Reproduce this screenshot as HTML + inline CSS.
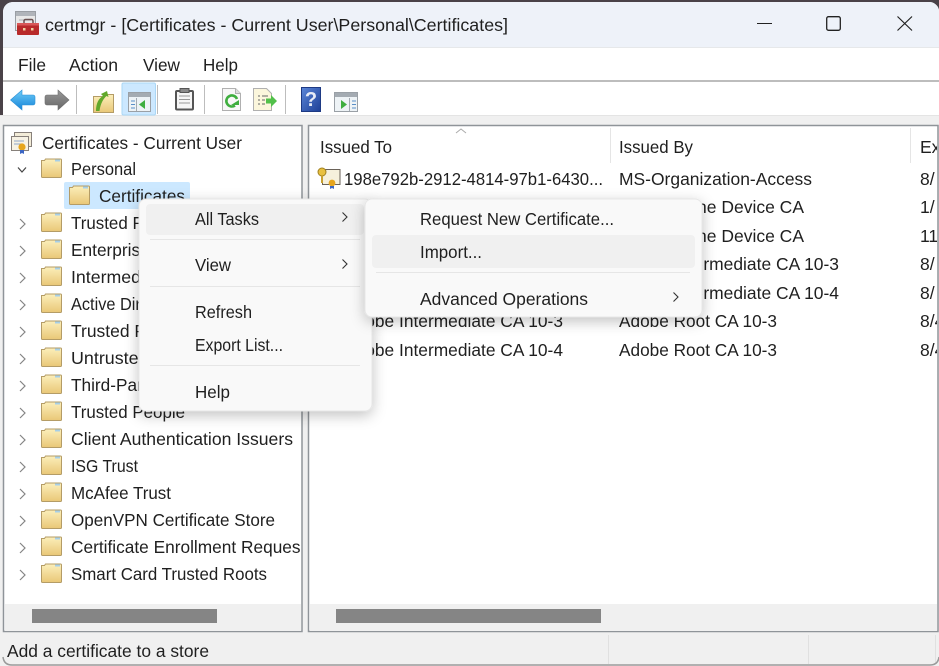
<!DOCTYPE html>
<html><head><meta charset="utf-8"><title>certmgr</title>
<style>
html,body{margin:0;padding:0;width:939px;height:666px;overflow:hidden;background:#4a4248}
svg{display:block}
text{font-family:"Liberation Sans",sans-serif;font-size:17.5px;fill:#1f1f1f}
</style></head><body>
<svg width="939" height="666" viewBox="0 0 939 666" xmlns="http://www.w3.org/2000/svg">
<defs>
<linearGradient id="fg" x1="0" y1="0" x2="0" y2="1"><stop offset="0" stop-color="#fcefbb"/><stop offset="1" stop-color="#e9c777"/></linearGradient>
<linearGradient id="blue" x1="0" y1="0" x2="0" y2="1"><stop offset="0" stop-color="#6fcdf8"/><stop offset="1" stop-color="#1583d8"/></linearGradient>
<linearGradient id="gry" x1="0" y1="0" x2="0" y2="1"><stop offset="0" stop-color="#999"/><stop offset="1" stop-color="#666"/></linearGradient>
<linearGradient id="hlp" x1="0" y1="0" x2="1" y2="1"><stop offset="0" stop-color="#5b86d8"/><stop offset="1" stop-color="#1d3f96"/></linearGradient>
<filter id="sh" x="-20%" y="-20%" width="140%" height="150%"><feDropShadow dx="0" dy="4" stdDeviation="7" flood-color="#000" flood-opacity=".24"/></filter>
<clipPath id="treeclip"><rect x="5" y="127" width="295.500" height="477"/></clipPath>
<clipPath id="listclip"><rect x="310" y="127" width="627" height="477"/></clipPath>
<g id="folder">
<path d="M0.500 2.500h3l1-1.500h15a1 1 0 0 1 1 1v16.500a1 1 0 0 1-1 1H1.500a1 1 0 0 1-1-1z" fill="url(#fg)" stroke="#b49c66"/>
<rect x="14" y="1.500" width="5" height="2" fill="#a6cfe8"/>
</g>
<path id="chev" d="M-3-5 2 0-3 5" fill="none" stroke="#858585" stroke-width="1.200"/>
<path id="mchev" d="M-2.500-4.500 2 0-2.500 4.500" fill="none" stroke="#333" stroke-width="1.100"/>
</defs>

<!-- window -->
<path d="M3 666V12a10 10 0 0 1 10-10H929a10 10 0 0 1 10 8V666z" fill="#f0f0f0"/>
<path d="M3 47V12a10 10 0 0 1 10-10H929a10 10 0 0 1 10 8V47z" fill="#eef2f9"/>
<rect x="3" y="47" width="936" height="1" fill="#e6e8ea"/>
<rect x="3" y="48" width="936" height="32" fill="#fff"/>
<rect x="3" y="80" width="936" height="2" fill="#bdbdbd"/>
<rect x="3" y="82" width="936" height="33" fill="#fff"/>
<rect x="0" y="115" width="939" height="551" fill="#f0f0f0"/>
<rect x="0" y="115" width="939" height="1" fill="#e4e4e4"/>

<!-- title icon -->
<rect x="15.500" y="11.500" width="20" height="19" fill="#e8e8e8" stroke="#9a9ea4"/>
<rect x="16" y="12" width="19" height="4" fill="#b0b4ba"/>
<path d="M19 20h12" stroke="#a8acb0"/>
<path d="M24 24v-3a1.500 1.500 0 0 1 1.500-1.500h6a1.500 1.500 0 0 1 1.500 1.500v3" fill="none" stroke="#6a5050" stroke-width="1.500"/>
<rect x="17" y="23" width="22" height="12" rx="1" fill="#b82a2a"/>
<rect x="17" y="23" width="22" height="2.500" fill="#d85858"/>
<rect x="23" y="28" width="2.500" height="2.500" fill="#f0d0a0"/><rect x="31" y="28" width="2.500" height="2.500" fill="#f0d0a0"/>
<text x="45" y="31" textLength="463" lengthAdjust="spacingAndGlyphs">certmgr - [Certificates - Current User\Personal\Certificates]</text>

<!-- caption buttons -->
<rect x="757" y="23" width="15" height="1" fill="#222"/>
<rect x="826.700" y="16.700" width="13.600" height="13.600" rx="1.800" fill="none" stroke="#222" stroke-width="1.300"/>
<path d="M897.500 16.500 912 30.500M912 16.500 897.500 30.500" stroke="#222" stroke-width="1.200" fill="none"/>

<!-- menu bar -->
<text x="18" y="71" textLength="28" lengthAdjust="spacingAndGlyphs">File</text>
<text x="69" y="71" textLength="49" lengthAdjust="spacingAndGlyphs">Action</text>
<text x="143" y="71" textLength="37" lengthAdjust="spacingAndGlyphs">View</text>
<text x="203" y="71" textLength="35" lengthAdjust="spacingAndGlyphs">Help</text>

<!-- toolbar -->
<path d="M10.500 100 22 90v5h11a2 2 0 0 1 2 2v6a2 2 0 0 1-2 2H22v5z" fill="url(#blue)" stroke="#2a8fd6" stroke-width=".6"/>
<path d="M69 100 58 90v5H47a2 2 0 0 0-2 2v6a2 2 0 0 0 2 2h11v5z" fill="url(#gry)" stroke="#6e6e6e" stroke-width=".6"/>
<rect x="76" y="85" width="1" height="29" fill="#bdbdbd"/>
<path d="M93.500 96.500h11l2-2h7v18h-20z" fill="url(#fg)" stroke="#b49c66"/>
<path d="M96 111c0-8 3-13 7-15l-2-2 6-3 1.500 6-2-1c-2.500 2-6 7-7 15z" fill="#62a82a"/>
<rect x="122" y="83" width="33.500" height="32" rx="1.500" fill="#cce8ff" stroke="#aad7f6"/>
<rect x="128.500" y="92.500" width="22" height="19" fill="#eef3f6" stroke="#9aa0a6"/>
<rect x="129" y="93" width="21" height="4" fill="#a4abb2"/>
<path d="M131 101h4M131 104.500h4M131 108h4" stroke="#5a8fc8"/>
<rect x="136" y="98" width="1" height="13" fill="#a4abb2"/>
<path d="M145 100v9l-6-4.500z" fill="#3fae3f"/>
<rect x="157" y="85" width="1" height="29" fill="#bdbdbd"/>
<rect x="176" y="91" width="17" height="18.500" rx="1" fill="#f5f5f5" stroke="#555" stroke-width="2"/>
<rect x="180" y="88.500" width="9" height="4" fill="#8a8a8a" stroke="#555"/>
<path d="M179 96h11M179 99.500h11M179 103h11" stroke="#999"/>
<rect x="204" y="85" width="1" height="29" fill="#bdbdbd"/>
<path d="M222.500 88.500h13l5 5v17h-18z" fill="#f7f7f7" stroke="#b0b0b0"/>
<path d="M235.500 88.500v5h5" fill="#ddd" stroke="#b0b0b0"/>
<path d="M237 99a5.500 5.500 0 1 0-2 6.500" fill="none" stroke="#3eae3e" stroke-width="2.600"/>
<path d="M231 105h8v-5z" fill="#3eae3e"/>
<path d="M253.500 88.500h13l5 5v17h-18z" fill="#fbf6dc" stroke="#b0b0b0"/>
<path d="M258 96h2M258 100h2M258 104h2M262 96h6M262 100h3M262 104h3" stroke="#666"/>
<path d="M266 98.500h5v-3.500l6 6-6 6v-3.500h-5z" fill="#52c04a"/>
<rect x="285" y="85" width="1" height="29" fill="#bdbdbd"/>
<rect x="301.500" y="87.500" width="19" height="24" fill="url(#hlp)" stroke="#1e3a84"/>
<text x="311" y="106" text-anchor="middle" style="font-size:20px;font-weight:bold;fill:#e8ecf6">?</text>
<rect x="334.500" y="92.500" width="23" height="19" fill="#eef3f6" stroke="#9aa0a6"/>
<rect x="335" y="93" width="22" height="4" fill="#a4abb2"/>
<path d="M341 100v9l6-4.500z" fill="#3fae3f"/>
<rect x="349" y="98" width="1" height="13" fill="#a4abb2"/>
<path d="M352 101h4M352 104.500h4M352 108h4" stroke="#5a8fc8"/>

<!-- left pane -->
<rect x="3.500" y="125.500" width="298.500" height="506" fill="#fff" stroke="#8f9499" stroke-width="1.500"/>
<rect x="5" y="604" width="296" height="27" fill="#f0f0f0"/>
<rect x="32" y="609" width="185" height="14" fill="#858585"/>
<!-- right pane -->
<rect x="308.500" y="125.500" width="629.500" height="506" fill="#fff" stroke="#8f9499" stroke-width="1.500"/>
<rect x="310" y="604" width="627" height="27" fill="#f0f0f0"/>
<rect x="336" y="609" width="265" height="14" fill="#858585"/>

<!-- tree -->
<g clip-path="url(#treeclip)">
<rect x="14.500" y="132.500" width="17" height="14" fill="#f3ecd8" stroke="#87807a"/>
<rect x="11.500" y="136.500" width="17" height="14" fill="#f7f2e4" stroke="#87807a"/>
<path d="M14 141h10M14 144h7" stroke="#8fa5c8"/>
<circle cx="22" cy="147" r="3.600" fill="#e6a51e"/>
<path d="M20 150v4l2-1 2 1v-4z" fill="#3b66c4"/>
<text x="42" y="149" textLength="200" lengthAdjust="spacingAndGlyphs">Certificates - Current User</text>
<path d="M18 167.500l4 4.500 4-4.500" fill="none" stroke="#444" stroke-width="1.200"/>
<use href="#folder" x="41" y="158"/>
<text x="71" y="175" textLength="65" lengthAdjust="spacingAndGlyphs">Personal</text>
<rect x="64" y="182" width="126" height="27" rx="2" fill="#cce8ff"/>
<use href="#folder" x="69" y="185"/>
<text x="99" y="202" textLength="86" lengthAdjust="spacingAndGlyphs">Certificates</text>

<use href="#chev" x="23" y="224"/><use href="#folder" x="41" y="212"/>
<text x="71" y="229" textLength="275" lengthAdjust="spacingAndGlyphs">Trusted Root Certification Authorities</text>
<use href="#chev" x="23" y="251"/><use href="#folder" x="41" y="239"/>
<text x="71" y="256" textLength="122" lengthAdjust="spacingAndGlyphs">Enterprise Trust</text>
<use href="#chev" x="23" y="278"/><use href="#folder" x="41" y="266"/>
<text x="71" y="283" textLength="285" lengthAdjust="spacingAndGlyphs">Intermediate Certification Authorities</text>
<use href="#chev" x="23" y="305"/><use href="#folder" x="41" y="293"/>
<text x="71" y="310" textLength="205" lengthAdjust="spacingAndGlyphs">Active Directory User Object</text>
<use href="#chev" x="23" y="332"/><use href="#folder" x="41" y="320"/>
<text x="71" y="337" textLength="145" lengthAdjust="spacingAndGlyphs">Trusted Publishers</text>
<use href="#chev" x="23" y="359"/><use href="#folder" x="41" y="347"/>
<text x="71" y="364" textLength="172" lengthAdjust="spacingAndGlyphs">Untrusted Certificates</text>
<use href="#chev" x="23" y="386"/><use href="#folder" x="41" y="374"/>
<text x="71" y="391" textLength="222" lengthAdjust="spacingAndGlyphs">Third-Party Root Certification</text>
<use href="#chev" x="23" y="413"/><use href="#folder" x="41" y="401"/>
<text x="71" y="418" textLength="114" lengthAdjust="spacingAndGlyphs">Trusted People</text>
<use href="#chev" x="23" y="440"/><use href="#folder" x="41" y="428"/>
<text x="71" y="445" textLength="222" lengthAdjust="spacingAndGlyphs">Client Authentication Issuers</text>
<use href="#chev" x="23" y="467"/><use href="#folder" x="41" y="455"/>
<text x="71" y="472" textLength="67" lengthAdjust="spacingAndGlyphs">ISG Trust</text>
<use href="#chev" x="23" y="494"/><use href="#folder" x="41" y="482"/>
<text x="71" y="499" textLength="100" lengthAdjust="spacingAndGlyphs">McAfee Trust</text>
<use href="#chev" x="23" y="521"/><use href="#folder" x="41" y="509"/>
<text x="71" y="526" textLength="204" lengthAdjust="spacingAndGlyphs">OpenVPN Certificate Store</text>
<use href="#chev" x="23" y="548"/><use href="#folder" x="41" y="536"/>
<text x="71" y="553" textLength="243" lengthAdjust="spacingAndGlyphs">Certificate Enrollment Requests</text>
<use href="#chev" x="23" y="575"/><use href="#folder" x="41" y="563"/>
<text x="71" y="580" textLength="196" lengthAdjust="spacingAndGlyphs">Smart Card Trusted Roots</text>
</g>

<!-- list -->
<g clip-path="url(#listclip)">
<path d="M456 133l5-4 5 4" fill="none" stroke="#aaa"/>
<rect x="610" y="128" width="1" height="35" fill="#e5e5e5"/>
<rect x="910" y="128" width="1" height="35" fill="#e5e5e5"/>
<text x="320" y="153" textLength="72" lengthAdjust="spacingAndGlyphs">Issued To</text>
<text x="619" y="153" textLength="74" lengthAdjust="spacingAndGlyphs">Issued By</text>
<text x="920" y="153">Expiration</text>
<rect x="322.500" y="169.500" width="17.500" height="15" fill="#f6f0dc" stroke="#6a6258"/>
<circle cx="322" cy="172" r="4" fill="#e8c040" stroke="#a08020"/>
<rect x="321" y="175" width="2" height="8" fill="#c8a030"/>
<circle cx="332" cy="183" r="3.400" fill="#e6a51e"/>
<path d="M330 186v3l2-1 2 1v-3z" fill="#3b66c4"/>
<text x="344" y="185" textLength="259" lengthAdjust="spacingAndGlyphs">198e792b-2912-4814-97b1-6430...</text>
<text x="619" y="185" textLength="193" lengthAdjust="spacingAndGlyphs">MS-Organization-Access</text>
<text x="920" y="185">8/</text>
<text x="804" y="213" text-anchor="end">Microsoft Intune Device CA</text>
<text x="920" y="213">1/</text>
<text x="804" y="242" text-anchor="end">Microsoft Intune Device CA</text>
<text x="920" y="242">11</text>
<text x="619" y="270" textLength="220" lengthAdjust="spacingAndGlyphs">Adobe Intermediate CA 10-3</text>
<text x="920" y="270">8/</text>
<text x="619" y="299" textLength="220" lengthAdjust="spacingAndGlyphs">Adobe Intermediate CA 10-4</text>
<text x="920" y="299">8/</text>
<text x="344" y="327" textLength="219" lengthAdjust="spacingAndGlyphs">Adobe Intermediate CA 10-3</text>
<text x="619" y="327" textLength="158" lengthAdjust="spacingAndGlyphs">Adobe Root CA 10-3</text>
<text x="920" y="327">8/4</text>
<text x="344" y="356" textLength="219" lengthAdjust="spacingAndGlyphs">Adobe Intermediate CA 10-4</text>
<text x="619" y="356" textLength="158" lengthAdjust="spacingAndGlyphs">Adobe Root CA 10-3</text>
<text x="920" y="356">8/4</text>
</g>

<!-- status bar -->
<text x="7" y="657" textLength="202" lengthAdjust="spacingAndGlyphs">Add a certificate to a store</text>
<rect x="608" y="635" width="1" height="29" fill="#e0e0e0"/>
<rect x="808" y="635" width="1" height="29" fill="#e0e0e0"/>
<rect x="935" y="635" width="1" height="29" fill="#e0e0e0"/>
<path d="M3 657q1 8 9 8H930q8 0 9-8" fill="none" stroke="#9a9a9a" stroke-width="1.500"/>

<!-- context menu -->
<rect x="139" y="199" width="233" height="212" rx="7" fill="#f9f9f9" stroke="#e6e6e6" filter="url(#sh)"/>
<rect x="146" y="204" width="218" height="31" rx="4" fill="#f0f0f0"/>
<text x="195" y="225" textLength="64" lengthAdjust="spacingAndGlyphs">All Tasks</text>
<use href="#mchev" x="345" y="217"/>
<rect x="150" y="239" width="210" height="1" fill="#e6e6e6"/>
<text x="195" y="271" textLength="36" lengthAdjust="spacingAndGlyphs">View</text>
<use href="#mchev" x="345" y="264"/>
<rect x="150" y="286" width="210" height="1" fill="#e6e6e6"/>
<text x="195" y="318" textLength="57" lengthAdjust="spacingAndGlyphs">Refresh</text>
<text x="195" y="351" textLength="88" lengthAdjust="spacingAndGlyphs">Export List...</text>
<rect x="150" y="365" width="210" height="1" fill="#e6e6e6"/>
<text x="195" y="398" textLength="35" lengthAdjust="spacingAndGlyphs">Help</text>

<!-- submenu -->
<rect x="365" y="199" width="337" height="118" rx="7" fill="#f9f9f9" stroke="#e6e6e6" filter="url(#sh)"/>
<text x="420" y="225" textLength="194" lengthAdjust="spacingAndGlyphs">Request New Certificate...</text>
<rect x="372" y="235" width="323" height="33" rx="4" fill="#f0f0f0"/>
<text x="420" y="258" textLength="62" lengthAdjust="spacingAndGlyphs">Import...</text>
<rect x="376" y="272" width="314" height="1" fill="#e6e6e6"/>
<text x="420" y="305" textLength="168" lengthAdjust="spacingAndGlyphs">Advanced Operations</text>
<use href="#mchev" x="676" y="297"/>
</svg>
</body></html>
